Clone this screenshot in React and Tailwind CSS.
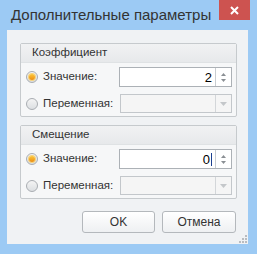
import React from "react";

const font = { fontFamily: '"Liberation Sans", Arial, sans-serif' };

function Radio({ checked }) {
  return (
    <span className="flex h-[12px] w-[12px] shrink-0 items-center justify-center rounded-full border border-[#a9adb2] bg-gradient-to-b from-[#f4f4f4] to-[#dcdfe2]">
      {checked && (
        <span className="h-[6px] w-[6px] rounded-full bg-gradient-to-b from-[#fcc83a] to-[#ec8c0a] ring-1 ring-[#f6d27a]" />
      )}
    </span>
  );
}

function SpinEdit({ value, caret }) {
  return (
    <div className="flex h-[20px] w-[113px] shrink-0 border border-[#acb1b6] bg-white">
      <div className="flex flex-1 items-center justify-end pr-[3px] text-[13px] leading-none text-black">
        <span>{value}</span>
        {caret && <span className="ml-[1px] h-[13px] w-[1px] bg-[#1b3f8f]" />}
      </div>
      <div className="flex w-[16px] flex-col items-center justify-center gap-[3px] border-l border-[#c9cdd1]">
        <svg width="5" height="3" viewBox="0 0 5 3"><path d="M2.5 0L5 3H0z" fill="#8a8f94" /></svg>
        <svg width="5" height="3" viewBox="0 0 5 3"><path d="M0 0H5L2.5 3z" fill="#8a8f94" /></svg>
      </div>
    </div>
  );
}

function Combo() {
  return (
    <div className="ml-[1px] flex h-[19px] w-[112px] shrink-0 border border-[#c3c7cb] bg-[#f5f5f5]">
      <div className="flex-1" />
      <div className="flex w-[16px] items-center justify-center border-l border-[#d3d6d9]">
        <svg width="7" height="4" viewBox="0 0 7 4"><path d="M0 0H7L3.5 4z" fill="#c4c7ca" /></svg>
      </div>
    </div>
  );
}

function Group({ title, value, caret }) {
  return (
    <div className="w-[217px] rounded-[2px] border border-[#c6cacd] bg-[#f6f7f8]">
      <div className="flex h-[19px] items-center border-b border-[#dfe2e4] bg-gradient-to-b from-[#f1f2f3] to-[#e7e9eb] pl-[11px] text-[11.5px] text-[#333]">
        {title}
      </div>
      <div className="flex flex-col gap-[7px] pb-[3px] pl-[5px] pr-[4px] pt-[4px]">
        <div className="flex h-[20px] items-center">
          <Radio checked />
          <span className="ml-[5px] flex-1 whitespace-nowrap text-[11.5px] text-[#333]">Значение:</span>
          <SpinEdit value={value} caret={caret} />
        </div>
        <div className="flex h-[19px] items-center">
          <Radio />
          <span className="ml-[5px] flex-1 whitespace-nowrap text-[11.5px] text-[#333]">Переменная:</span>
          <Combo />
        </div>
      </div>
    </div>
  );
}

export default function App() {
  return (
    <div className="flex h-[254px] w-[257px] flex-col bg-[#9ccaf4]" style={font}>
      {/* title bar */}
      <div className="flex h-[30px] items-start">
        <div className="flex-1 whitespace-nowrap pl-[11px] pt-[5px] text-[15px] leading-[20px] text-[#333]">
          Дополнительные параметры
        </div>
        <div className="mr-[7px] flex h-[20px] w-[31px] shrink-0 items-center justify-center bg-[#cd5350]">
          <svg width="9" height="9" viewBox="0 0 9 9">
            <path d="M1 1L8 8M8 1L1 8" stroke="#fff" strokeWidth="2" />
          </svg>
        </div>
      </div>

      {/* client area */}
      <div className="ml-[7px] flex h-[214px] w-[241px] flex-col bg-[#f0f2f4] pl-[13px] pt-[13px]">
        <div className="flex flex-col gap-[8px]">
          <Group title="Коэффициент" value="2" />
          <Group title="Смещение" value="0" caret />
        </div>
        <div className="mt-auto flex items-end pb-[1px]">
          <div className="mb-[10px] ml-[62px] flex gap-[7px]">
            <button className="h-[22px] w-[73px] rounded-[3px] border border-[#b4b8bc] bg-gradient-to-b from-white to-[#eef0f2] text-[12px] text-[#333]">
              OK
            </button>
            <button className="h-[22px] w-[74px] rounded-[3px] border border-[#b4b8bc] bg-gradient-to-b from-white to-[#eef0f2] text-[12px] text-[#333]">
              Отмена
            </button>
          </div>
          <svg className="ml-[3px]" width="8" height="8" viewBox="0 0 8 8">
            <g fill="#b9bcc0">
              <rect x="6" y="0" width="2" height="2" />
              <rect x="3" y="3" width="2" height="2" />
              <rect x="6" y="3" width="2" height="2" />
              <rect x="0" y="6" width="2" height="2" />
              <rect x="3" y="6" width="2" height="2" />
              <rect x="6" y="6" width="2" height="2" />
            </g>
          </svg>
        </div>
      </div>
    </div>
  );
}
